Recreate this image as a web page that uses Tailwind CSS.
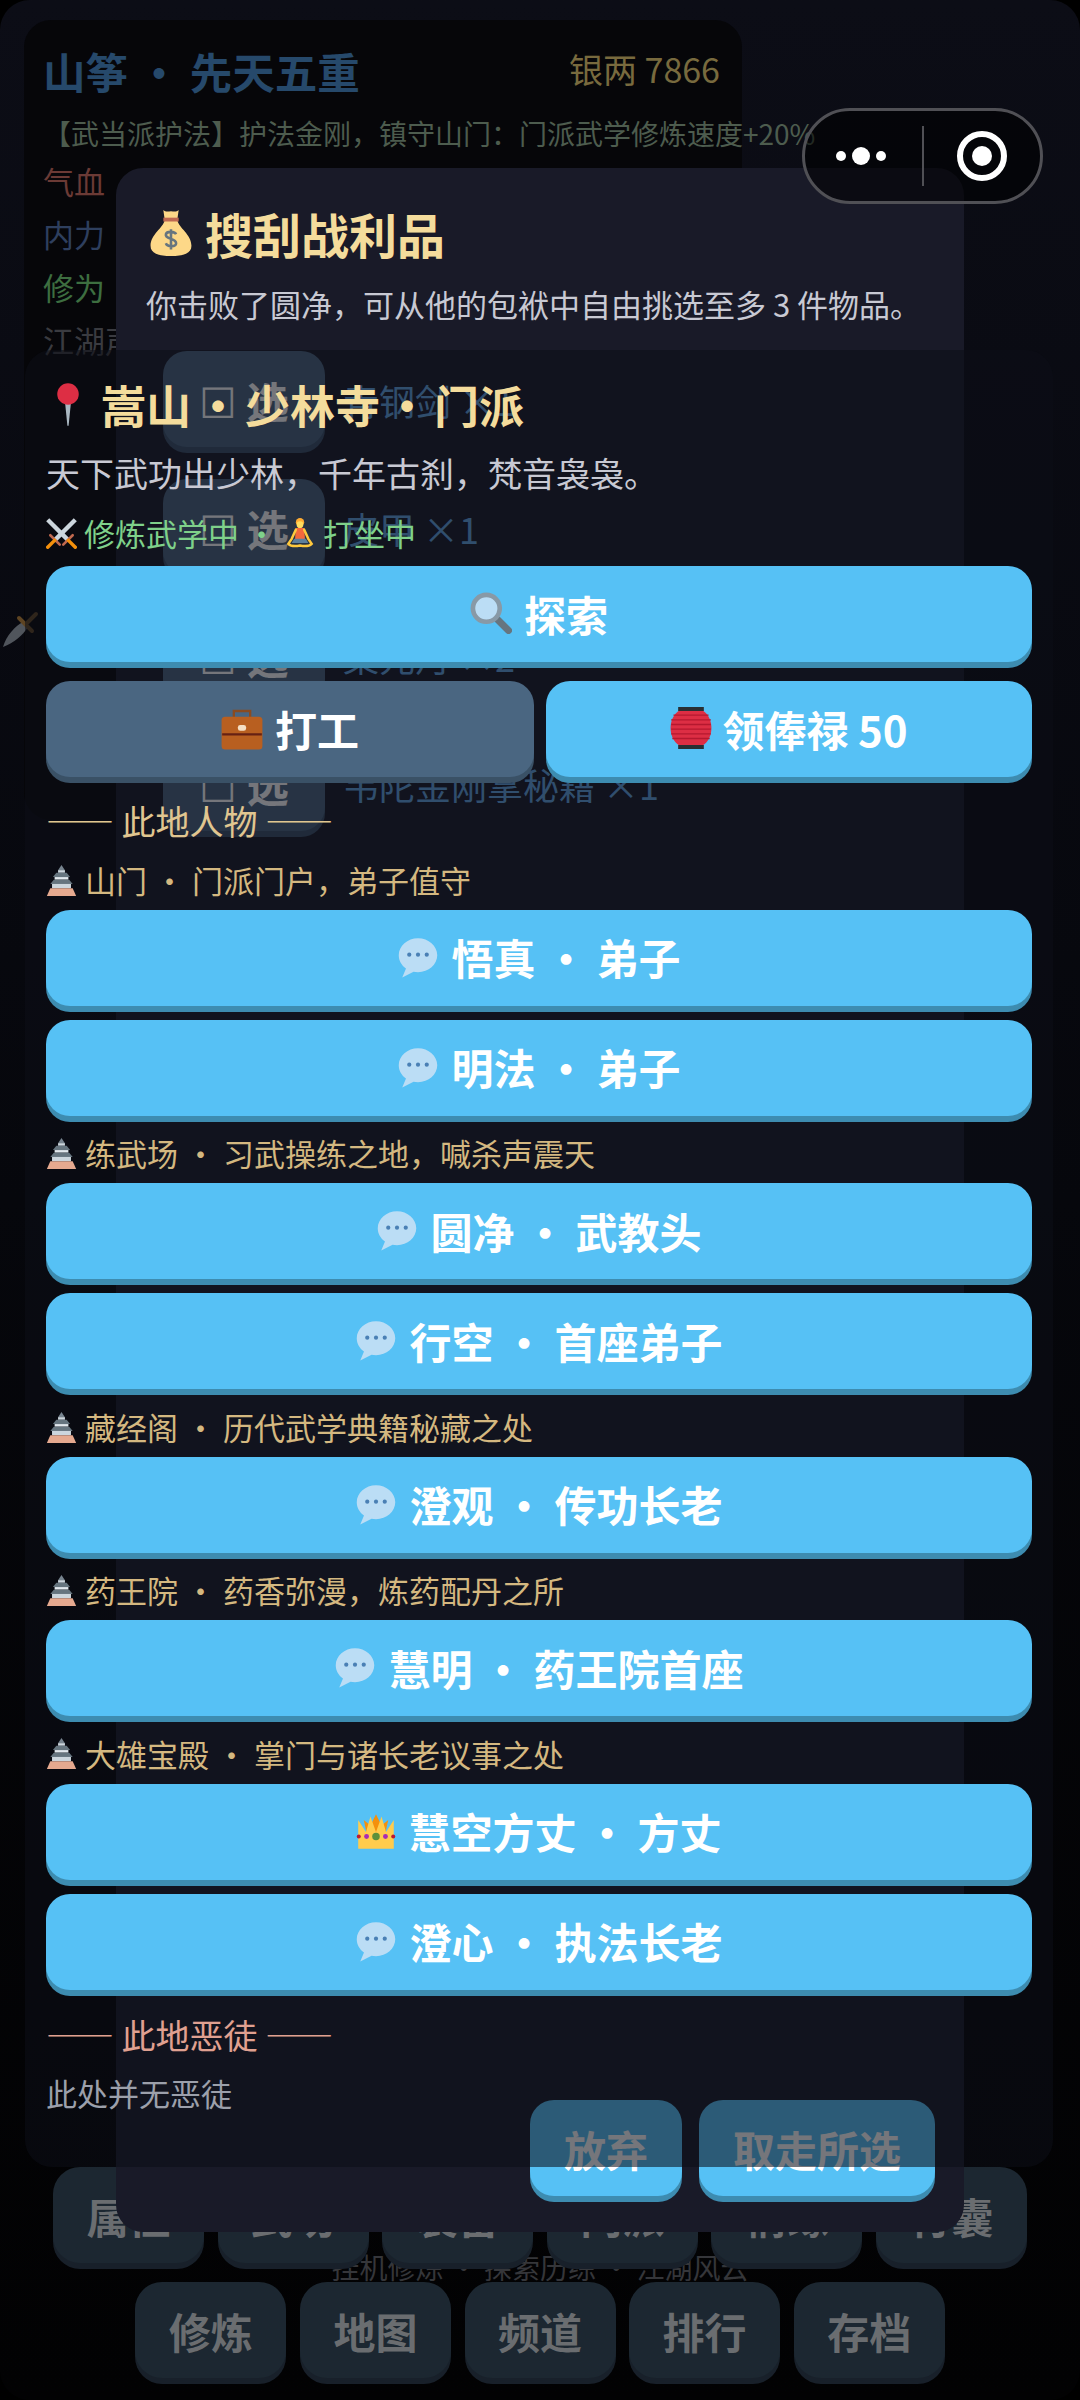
<!DOCTYPE html>
<html lang="zh">
<head>
  <meta charset="UTF-8" />
  <title>山筝</title>
  <script src="https://cdn.jsdelivr.net/npm/@tailwindcss/browser@4"></script>
</head>
<body class="bg-black">

  <!-- emoji -->
  <svg class="hidden">
    <symbol id="bubble" viewBox="0 0 36 36">
      <path fill="#BBDDF5" d="M18 2C9 2 1.500 8.600 1.500 16.500c0 4.600 2.400 8.700 6.200 11.400L4.500 35.500l9.700-4.800c1.200.2 2.500.3 3.800.3 9 0 16.500-6.600 16.500-14.500S27 2 18 2z"/>
      <circle cx="10.500" cy="16" r="1.800" fill="#4A80B5"/><circle cx="18" cy="16" r="1.800" fill="#4A80B5"/><circle cx="25.500" cy="16" r="1.800" fill="#4A80B5"/>
    </symbol>
    <symbol id="castle" viewBox="0 0 36 36">
      <path fill="#77848F" d="M18 0l4 6h-8z"/><path fill="#CCD6DD" d="M14 6h8v3h-8z"/>
      <path fill="#66757F" d="M12 9h12l4 5H8z"/><path fill="#E1E8ED" d="M10 14h16v3H10z"/>
      <path fill="#66757F" d="M9 17h18l4 5H5z"/><path fill="#CCD6DD" d="M7 22h22v5H7z"/>
      <path fill="#E5A98F" d="M5 27h26l4 9H1z"/>
    </symbol>
    <symbol id="crown" viewBox="0 0 36 36">
      <path fill="#F4900C" d="M10 22L7 8l6 5 5-10 5 10 6-5-3 14z"/>
      <path fill="#FFCC4D" d="M2 34V8l7 11 4-14 5 14 5-14 4 14 7-11v26z"/>
      <circle cx="2.500" cy="23" r="1.800" fill="#BE1931"/><circle cx="33.500" cy="23" r="1.800" fill="#BE1931"/>
      <circle cx="9.500" cy="23" r="2.200" fill="#AA2BB5"/><circle cx="26.500" cy="23" r="2.200" fill="#AA2BB5"/>
      <circle cx="18" cy="23" r="3.400" fill="#5C913B"/>
    </symbol>
  </svg>

  <div class="relative w-[1080px] h-[2400px] overflow-hidden bg-black font-['Noto_Sans_CJK_SC',sans-serif]">

    <!-- page under the dialogs -->
    <div class="isolate flex flex-col h-full rounded-[30px] bg-linear-to-b from-[#0c0d16] via-[#06070c] to-[#020203]">
      <div class="ml-[24px] mt-[20px] w-[718px] h-[800px] rounded-[27px] bg-[#060609] pl-[19px] pr-[20px] pt-[24px] whitespace-nowrap">
        <div class="flex justify-between items-center h-[54px]">
          <span class="text-[42.500px] font-bold text-[#26496b]">山筝 · 先天五重</span>
          <span class="text-[34px] text-[#786a3e] pr-[2px] -mt-[6px]">银两 7866</span>
        </div>
        <div class="mt-[15px] h-[40px] flex items-center text-[28px] text-[#4d5c4e]">【武当派护法】护法金刚，镇守山门：门派武学修炼速度+20%</div>
        <div class="mt-[6px] h-[44px] flex items-center text-[31px] text-[#6b3a35]">气血</div>
        <div class="mt-[9px] h-[44px] flex items-center text-[31px] text-[#2e3f5e]">内力</div>
        <div class="mt-[9px] h-[44px] flex items-center text-[31px] text-[#3d6e40]">修为</div>
        <div class="mt-[9px] h-[44px] flex items-center text-[31px] text-[#3a3b40]">江湖声望</div>
      </div>

      <div class="mt-auto pb-[22px] text-[42px] font-bold text-[#6a6d70]">
        <div class="relative z-10 flex justify-center gap-[13.600px]">
          <div class="w-[151px] h-[96px] rounded-[27px] bg-[#1c2731] shadow-[0_6px_0_#18202a] flex items-center justify-center">属性</div>
          <div class="w-[151px] h-[96px] rounded-[27px] bg-[#1c2731] shadow-[0_6px_0_#18202a] flex items-center justify-center">武功</div>
          <div class="w-[151px] h-[96px] rounded-[27px] bg-[#1c2731] shadow-[0_6px_0_#18202a] flex items-center justify-center">装备</div>
          <div class="w-[151px] h-[96px] rounded-[27px] bg-[#1c2731] shadow-[0_6px_0_#18202a] flex items-center justify-center">门派</div>
          <div class="w-[151px] h-[96px] rounded-[27px] bg-[#1c2731] shadow-[0_6px_0_#18202a] flex items-center justify-center">情缘</div>
          <div class="w-[151px] h-[96px] rounded-[27px] bg-[#1c2731] shadow-[0_6px_0_#18202a] flex items-center justify-center">行囊</div>
        </div>
        <div class="h-[40px] -mt-[16px] flex items-center justify-center text-[28px] font-normal text-[#35363a]">挂机修炼 · 探索历练 · 江湖风云</div>
        <div class="-mt-[5px] flex justify-center gap-[13.600px]">
          <div class="w-[151px] h-[96px] rounded-[27px] bg-[#1c2731] shadow-[0_6px_0_#18202a] flex items-center justify-center">修炼</div>
          <div class="w-[151px] h-[96px] rounded-[27px] bg-[#1c2731] shadow-[0_6px_0_#18202a] flex items-center justify-center">地图</div>
          <div class="w-[151px] h-[96px] rounded-[27px] bg-[#1c2731] shadow-[0_6px_0_#18202a] flex items-center justify-center">频道</div>
          <div class="w-[151px] h-[96px] rounded-[27px] bg-[#1c2731] shadow-[0_6px_0_#18202a] flex items-center justify-center">排行</div>
          <div class="w-[151px] h-[96px] rounded-[27px] bg-[#1c2731] shadow-[0_6px_0_#18202a] flex items-center justify-center">存档</div>
        </div>
      </div>
    </div>

    <!-- dagger peeking out at the left edge -->
    <svg class="absolute left-[3px] top-[611px] w-[36px] h-[36px]" viewBox="0 0 36 36">
      <path fill="#50555c" d="M0 36C3 25 12 15 20 11l5 5c-5 8-14 16-25 20z"/>
      <path stroke="#5e4422" stroke-width="4" stroke-linecap="round" d="M16 7l13 13M24 12l9-9"/>
    </svg>

    <!-- loot dialog -->
    <div class="absolute left-[116px] top-[168px] w-[848px] h-[2064px] rounded-[27px] bg-[#191a28] flex flex-col whitespace-nowrap">
      <div class="ml-[32px] mt-[34px] h-[62px] flex items-center text-[48px] font-bold text-[#f4dc9c]">
        <svg class="w-[46px] h-[48px] mr-[11px]" viewBox="0 0 36 36">
          <path fill="#FDD888" d="M13 8h10c1 6 11 11 11 20 0 6-6 8-16 8S2 34 2 28c0-9 10-14 11-20z"/>
          <path fill="#FDD888" d="M12 0c2 2 4 1 6 1s4 1 6-1l-1 7H13z"/>
          <path fill="#BF6952" d="M12 6h12v3H12z"/>
          <path fill="none" stroke="#67757F" stroke-width="2" d="M22 19c-1-2-7-3-8 0-1 4 8 3 8 7 0 3-7 3-8 0M18 15v16"/>
        </svg>
        搜刮战利品
      </div>
      <div class="ml-[30px] mt-[18px] h-[44px] flex items-center text-[31px] text-[#c8c9d3]">你击败了圆净，可从他的包袱中自由挑选至多 3 件物品。</div>

      <div class="mt-[25px] ml-[47px] flex flex-col gap-[32px]">
        <div class="flex items-center">
          <div class="w-[162px] h-[96px] rounded-[24px] bg-[#4a6580] shadow-[0_6px_0_#3a5068] flex items-center justify-center text-[42px] font-bold text-white"><span class="font-normal">☐</span>&nbsp;选</div>
          <span class="ml-[18px] pt-[2px] text-[36px] text-[#60a2df]">青钢剑 ×1</span>
        </div>
        <div class="flex items-center">
          <div class="w-[162px] h-[96px] rounded-[24px] bg-[#4a6580] shadow-[0_6px_0_#3a5068] flex items-center justify-center text-[42px] font-bold text-white"><span class="font-normal">☐</span>&nbsp;选</div>
          <span class="ml-[18px] pt-[2px] text-[36px] text-[#60a2df]">皮甲 ×1</span>
        </div>
        <div class="flex items-center">
          <div class="w-[162px] h-[96px] rounded-[24px] bg-[#4a6580] shadow-[0_6px_0_#3a5068] flex items-center justify-center text-[42px] font-bold text-white"><span class="font-normal">☐</span>&nbsp;选</div>
          <span class="ml-[18px] pt-[2px] text-[36px] text-[#60a2df]">集元丹 ×2</span>
        </div>
        <div class="flex items-center">
          <div class="w-[162px] h-[96px] rounded-[24px] bg-[#4a6580] shadow-[0_6px_0_#3a5068] flex items-center justify-center text-[42px] font-bold text-white"><span class="font-normal">☐</span>&nbsp;选</div>
          <span class="ml-[18px] pt-[2px] text-[36px] text-[#60a2df]">韦陀金刚掌秘籍 ×1</span>
        </div>
      </div>

      <div class="mt-auto mb-[36px] mr-[29px] flex justify-end gap-[17px] text-[42px] font-bold text-white">
        <div class="w-[152px] h-[96px] rounded-[24px] bg-[#56c1f5] shadow-[0_6px_0_#3d8cb0] flex items-center justify-center">放弃</div>
        <div class="w-[236px] h-[96px] rounded-[24px] bg-[#56c1f5] shadow-[0_6px_0_#3d8cb0] flex items-center justify-center">取走所选</div>
      </div>
    </div>

    <!-- map dialog, translucent, on top of the loot dialog -->
    <div class="absolute left-[25px] top-[350px] w-[1028px] h-[1817px] rounded-[27px] bg-[#0d0e16]/57 px-[21px] whitespace-nowrap">
      <div class="mt-[28px] h-[54px] flex items-center text-[45px] font-bold text-[#f4dc9c]">
        <svg class="w-[44px] h-[44px] mr-[11px]" viewBox="0 0 36 36">
          <path fill="#AAB8C2" d="M15.500 15h5L18.500 35h-1z"/>
          <circle cx="18" cy="9" r="8.800" fill="#DD2E44"/>
        </svg>
        嵩山<span class="mx-[4.500px]">·</span>少林寺<span class="mx-[4.500px]">·</span>门派
      </div>
      <div class="mt-[19px] h-[42px] flex items-center text-[34px] text-[#c8c9d3]">天下武功出少林，千年古刹，梵音袅袅。</div>
      <div class="mt-[22px] h-[36px] flex items-center text-[31px] text-[#7fd18a]">
        <svg class="w-[31px] h-[31px] mr-[7px]" viewBox="0 0 36 36">
          <g id="sword"><path stroke="#CCD6DD" stroke-width="5" d="M2 2l24 24"/><path stroke="#C1694F" stroke-width="3" stroke-linecap="round" d="M20 31l11-11"/><path stroke="#F4900C" stroke-width="4" stroke-linecap="round" d="M26 26l8 8"/></g>
          <use href="#sword" transform="matrix(-1 0 0 1 36 0)"/>
        </svg>
        修炼武学中
        <span class="ml-[7px]">·</span>
        <svg class="w-[30px] h-[32px] ml-[8px] mr-[8px]" viewBox="0 0 36 36">
          <circle cx="18" cy="5" r="5" fill="#FFAC33"/><circle cx="18" cy="8" r="4" fill="#FFDC5D"/>
          <path fill="#F4683C" d="M13 12h10l1 14H12z"/>
          <path fill="#5D7F9C" d="M11 25h14l3 5H8z"/>
          <path stroke="#FFC83D" stroke-width="3" stroke-linecap="round" fill="none" d="M13 14L8 25l-4 6c3 3 9 3 14 2 5 1 11 1 14-2l-4-6-5-11"/>
        </svg>
        打坐中
      </div>

      <div class="mt-[15px] h-[96px] pb-[2px] rounded-[24px] bg-[#56c1f5] shadow-[0_6px_0_#3d8cb0] flex items-center justify-center text-[42px] font-bold text-white">
        <svg class="w-[42px] h-[42px] mr-[12px]" viewBox="0 0 36 36">
          <path stroke="#66757F" stroke-width="6" stroke-linecap="round" d="M24 24l9 9"/>
          <circle cx="14" cy="14" r="11.500" fill="#BBDDF5" stroke="#8899A6" stroke-width="4"/>
        </svg>
        探索
      </div>
      <div class="mt-[19px] flex gap-[12px] text-[42px] font-bold text-white">
        <div class="w-[488px] h-[96px] pb-[2px] rounded-[24px] bg-[#4a6681] shadow-[0_6px_0_#3a5166] flex items-center justify-center">
          <svg class="w-[42px] h-[43px] mr-[12px]" viewBox="0 0 36 36">
            <path fill="none" stroke="#8A4B20" stroke-width="2" d="M11 10V3h14v7"/>
            <rect x="0.500" y="8" width="35" height="28" rx="3" fill="#B85F20"/>
            <path stroke="#662113" stroke-width="1.800" d="M1 23h34"/>
            <rect x="14.500" y="15" width="7" height="5" rx="2" fill="#F5DFC4"/>
          </svg>
          打工
        </div>
        <div class="flex-1 h-[96px] pb-[2px] rounded-[24px] bg-[#56c1f5] shadow-[0_6px_0_#3d8cb0] flex items-center justify-center">
          <svg class="w-[42px] h-[44px] mr-[10px]" viewBox="0 0 36 36">
            <path fill="#DD2E44" d="M8 3h20c5 3 7.500 9 7.500 15S33 30 28 33H8C3 30 .500 24 .500 18S3 6 8 3z"/>
            <path stroke="#B5182F" stroke-width="1.200" d="M3 7h30M1 11h34M1 15h34M1 19h34M1 23h34M2 27h32"/>
            <path fill="#292F33" d="M7 0h22v3.500H7zM7 32.500h22V36H7z"/>
          </svg>
          领俸禄 50
        </div>
      </div>

      <div class="mt-[23px] h-[40px] flex items-center text-[34px] text-[#e0c690]">—— 此地人物 ——</div>

      <div class="mt-[16.600px] h-[53.400px] pb-[6px] flex items-center text-[31px] text-[#d4b880]">
        <svg class="w-[31px] h-[31px] mr-[8px]"><use href="#castle"/></svg>山门 · 门派门户，弟子值守
      </div>
      <div class="mb-[14px] h-[96px] pb-[2px] rounded-[24px] bg-[#56c1f5] shadow-[0_6px_0_#3d8cb0] flex items-center justify-center text-[42px] font-bold text-white">
        <svg class="w-[42px] h-[42px] mr-[12px]"><use href="#bubble"/></svg>悟真 · 弟子
      </div>
      <div class="h-[96px] pb-[2px] rounded-[24px] bg-[#56c1f5] shadow-[0_6px_0_#3d8cb0] flex items-center justify-center text-[42px] font-bold text-white">
        <svg class="w-[42px] h-[42px] mr-[12px]"><use href="#bubble"/></svg>明法 · 弟子
      </div>

      <div class="mt-[14px] h-[53.400px] pb-[6px] flex items-center text-[31px] text-[#d4b880]">
        <svg class="w-[31px] h-[31px] mr-[8px]"><use href="#castle"/></svg>练武场 · 习武操练之地，喊杀声震天
      </div>
      <div class="mb-[14px] h-[96px] pb-[2px] rounded-[24px] bg-[#56c1f5] shadow-[0_6px_0_#3d8cb0] flex items-center justify-center text-[42px] font-bold text-white">
        <svg class="w-[42px] h-[42px] mr-[12px]"><use href="#bubble"/></svg>圆净 · 武教头
      </div>
      <div class="h-[96px] pb-[2px] rounded-[24px] bg-[#56c1f5] shadow-[0_6px_0_#3d8cb0] flex items-center justify-center text-[42px] font-bold text-white">
        <svg class="w-[42px] h-[42px] mr-[12px]"><use href="#bubble"/></svg>行空 · 首座弟子
      </div>

      <div class="mt-[14px] h-[53.400px] pb-[6px] flex items-center text-[31px] text-[#d4b880]">
        <svg class="w-[31px] h-[31px] mr-[8px]"><use href="#castle"/></svg>藏经阁 · 历代武学典籍秘藏之处
      </div>
      <div class="h-[96px] pb-[2px] rounded-[24px] bg-[#56c1f5] shadow-[0_6px_0_#3d8cb0] flex items-center justify-center text-[42px] font-bold text-white">
        <svg class="w-[42px] h-[42px] mr-[12px]"><use href="#bubble"/></svg>澄观 · 传功长老
      </div>

      <div class="mt-[14px] h-[53.400px] pb-[6px] flex items-center text-[31px] text-[#d4b880]">
        <svg class="w-[31px] h-[31px] mr-[8px]"><use href="#castle"/></svg>药王院 · 药香弥漫，炼药配丹之所
      </div>
      <div class="h-[96px] pb-[2px] rounded-[24px] bg-[#56c1f5] shadow-[0_6px_0_#3d8cb0] flex items-center justify-center text-[42px] font-bold text-white">
        <svg class="w-[42px] h-[42px] mr-[12px]"><use href="#bubble"/></svg>慧明 · 药王院首座
      </div>

      <div class="mt-[14px] h-[53.400px] pb-[6px] flex items-center text-[31px] text-[#d4b880]">
        <svg class="w-[31px] h-[31px] mr-[8px]"><use href="#castle"/></svg>大雄宝殿 · 掌门与诸长老议事之处
      </div>
      <div class="mb-[14px] h-[96px] pb-[2px] rounded-[24px] bg-[#56c1f5] shadow-[0_6px_0_#3d8cb0] flex items-center justify-center text-[42px] font-bold text-white">
        <svg class="w-[40px] h-[40px] mr-[12px]"><use href="#crown"/></svg>慧空方丈 · 方丈
      </div>
      <div class="h-[96px] pb-[2px] rounded-[24px] bg-[#56c1f5] shadow-[0_6px_0_#3d8cb0] flex items-center justify-center text-[42px] font-bold text-white">
        <svg class="w-[42px] h-[42px] mr-[12px]"><use href="#bubble"/></svg>澄心 · 执法长老
      </div>

      <div class="mt-[25px] h-[40px] flex items-center text-[34px] text-[#e0a090]">—— 此地恶徒 ——</div>
      <div class="mt-[19px] h-[40px] flex items-center text-[31px] text-[#9ca0ab]">此处并无恶徒</div>
    </div>

    <!-- mini program capsule -->
    <div class="absolute left-[802px] top-[108px] w-[241px] h-[96px] rounded-full border-[3px] border-[#505055] bg-black/55 flex items-center">
      <div class="w-[117px] pr-[6px] flex items-center justify-center gap-[6px]">
        <span class="w-[10px] h-[10px] rounded-full bg-white"></span>
        <span class="w-[18px] h-[18px] rounded-full bg-white"></span>
        <span class="w-[10px] h-[10px] rounded-full bg-white"></span>
      </div>
      <div class="w-[2px] h-[60px] bg-[#505055]"></div>
      <div class="flex-1 flex items-center justify-center">
        <div class="w-[50px] h-[50px] rounded-full border-[6px] border-white flex items-center justify-center">
          <span class="w-[20px] h-[20px] rounded-full bg-white"></span>
        </div>
      </div>
    </div>
  </div>
</body>
</html>
